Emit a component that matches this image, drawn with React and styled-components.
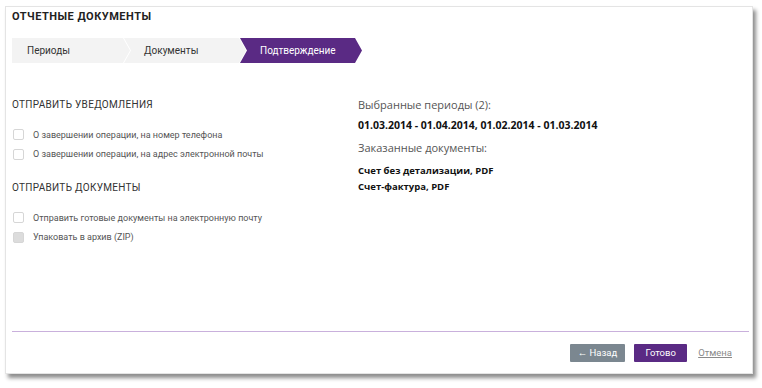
import styled, { createGlobalStyle } from "styled-components";

const GlobalStyle = createGlobalStyle`
  body {
    margin: 0;
    background: #ffffff;
    font-family: "Roboto", "Liberation Sans", sans-serif;
  }
`;

const color_purple = "#5a2a84";
const color_text = "#555555";
const color_step = "#f3f3f3";

const Page = styled.div`
  padding: 6px 0 0 5px;
  width: 762px;
  height: 388px;
  box-sizing: border-box;
`;

const Panel = styled.div`
  width: 748px;
  height: 368px;
  box-sizing: border-box;
  background: #ffffff;
  border: 1px solid #e4e4e4;
  box-shadow: 3px 4px 4px rgba(0, 0, 0, 0.45);
  display: flex;
  flex-direction: column;
  padding: 0 3px 0 6px;
`;

const Title = styled.h1`
  margin: 0;
  padding-top: 3px;
  font-size: 11px;
  line-height: 14px;
  font-weight: 700;
  letter-spacing: 0.5px;
  color: #222222;
`;

const Steps = styled.div`
  display: flex;
  margin-top: 14px;
  height: 25px;
`;

const Step = styled.div`
  width: ${(p) => (p.$first ? "118px" : "122px")};
  margin-left: ${(p) => (p.$first ? "0" : "-6px")};
  padding-left: ${(p) => (p.$first ? "15px" : "20px")};
  box-sizing: border-box;
  display: flex;
  align-items: center;
  font-size: 10px;
  color: ${(p) => (p.$active ? "#ffffff" : "#333333")};
  background: ${(p) => (p.$active ? color_purple : color_step)};
  clip-path: ${(p) =>
    p.$first
      ? "polygon(0 0, calc(100% - 7px) 0, 100% 50%, calc(100% - 7px) 100%, 0 100%)"
      : "polygon(0 0, calc(100% - 7px) 0, 100% 50%, calc(100% - 7px) 100%, 0 100%, 7px 50%)"};
`;

const Content = styled.div`
  flex: 1;
  display: grid;
  grid-template-columns: 346px 1fr;
  padding-top: 35px;
`;

const Column = styled.div`
  display: flex;
  flex-direction: column;
`;

const SectionTitle = styled.div`
  font-size: 10px;
  line-height: 14px;
  letter-spacing: 0.3px;
  color: #333333;
  margin-bottom: 13px;
  margin-top: ${(p) => (p.$mt ? p.$mt : "0")};
`;

const CheckRow = styled.label`
  display: flex;
  align-items: center;
  gap: 9px;
  height: 19.5px;
  padding-left: 1px;
  font-size: 9px;
  color: ${color_text};
`;

const Box = styled.span`
  width: 9px;
  height: 9px;
  border: 1px solid #d6d6d6;
  border-radius: 2px;
  background: ${(p) => (p.$filled ? "#dcdcdc" : "#ffffff")};
`;

const InfoLabel = styled.div`
  font-family: "Open Sans", "Liberation Sans", sans-serif;
  font-size: 11px;
  line-height: 13px;
  color: #555555;
  margin-bottom: ${(p) => (p.$mb ? p.$mb : "6px")};
`;

const InfoValue = styled.div`
  font-family: "Open Sans", "Liberation Sans", sans-serif;
  font-size: ${(p) => (p.$small ? "9.5px" : "10.5px")};
  line-height: 16px;
  font-weight: 700;
  color: #111111;
  margin-bottom: ${(p) => (p.$mb ? p.$mb : "0")};
`;

const Divider = styled.div`
  height: 1px;
  background: #c9b0dc;
`;

const Footer = styled.div`
  height: 41px;
  display: flex;
  align-items: center;
  justify-content: flex-end;
  padding-right: 17px;
  gap: 9px;
`;

const Button = styled.button`
  height: 18px;
  border: none;
  border-radius: 1px;
  padding: 0 ${(p) => (p.$primary ? "11px" : "8px")};
  font-family: "Roboto", "Liberation Sans", sans-serif;
  font-size: 9.5px;
  color: #ffffff;
  background: ${(p) => (p.$primary ? color_purple : "#7b8790")};
  min-width: ${(p) => (p.$primary ? "53px" : "55px")};
`;

const CancelLink = styled.a`
  font-size: 9.5px;
  color: #8a8a8a;
  text-decoration: underline;
  margin-left: 2px;
`;

const notifications = [
  "О завершении операции, на номер телефона",
  "О завершении операции, на адрес электронной почты",
];

const documents = [
  { text: "Отправить готовые документы на электронную почту" },
  { text: "Упаковать в архив (ZIP)", filled: true },
];

const App = () => {
  return (
    <Page>
      <GlobalStyle />
      <Panel>
        <Title>ОТЧЕТНЫЕ ДОКУМЕНТЫ</Title>
        <Steps>
          <Step $first>Периоды</Step>
          <Step>Документы</Step>
          <Step $active>Подтверждение</Step>
        </Steps>
        <Content>
          <Column>
            <SectionTitle>ОТПРАВИТЬ УВЕДОМЛЕНИЯ</SectionTitle>
            {notifications.map((text) => (
              <CheckRow key={text}>
                <Box />
                {text}
              </CheckRow>
            ))}
            <SectionTitle $mt="17px">ОТПРАВИТЬ ДОКУМЕНТЫ</SectionTitle>
            {documents.map((item) => (
              <CheckRow key={item.text}>
                <Box $filled={item.filled} />
                {item.text}
              </CheckRow>
            ))}
          </Column>
          <Column>
            <InfoLabel>Выбранные периоды (2):</InfoLabel>
            <InfoValue $mb="8px">
              01.03.2014 - 01.04.2014, 01.02.2014 - 01.03.2014
            </InfoValue>
            <InfoLabel $mb="9px">Заказанные документы:</InfoLabel>
            <InfoValue $small>Счет без детализации, PDF</InfoValue>
            <InfoValue $small>Счет-фактура, PDF</InfoValue>
          </Column>
        </Content>
        <Divider />
        <Footer>
          <Button>← Назад</Button>
          <Button $primary>Готово</Button>
          <CancelLink>Отмена</CancelLink>
        </Footer>
      </Panel>
    </Page>
  );
};

export default App;
